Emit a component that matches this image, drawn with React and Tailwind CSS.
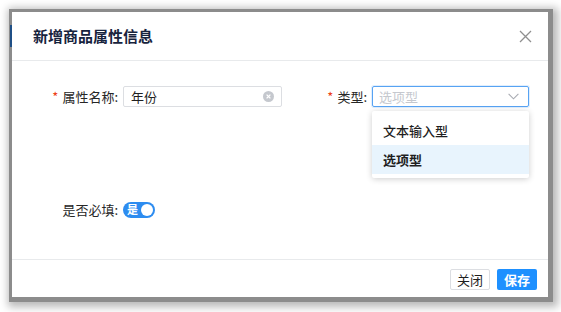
import React from 'react';

const font = { fontFamily: '"Noto Sans CJK SC", "Noto Sans", sans-serif' };

const FieldLabel = ({ required, children }) => (
  <div className="flex w-[90px] shrink-0 items-center justify-end pr-[5px] text-[13px] text-[#262626]">
    {required && <span className="mr-[4px] text-[#ed4014]">*</span>}
    {children}
  </div>
);

export default function App() {
  return (
    <div className="h-[312px] w-[561px] overflow-hidden bg-white" style={font}>
      <div className="relative ml-[12px] mt-[12px] flex h-[285px] w-[536px] flex-col bg-white shadow-[1px_1px_0_4px_#8c8c8c,3px_3px_8px_7px_rgba(0,0,0,0.28)]">
        <div className="absolute left-[-2px] top-[13px] h-[22px] w-[2px] bg-[#1f4f86]" />

        {/* header */}
        <div className="flex h-[49px] shrink-0 items-center justify-between border-b border-[#e8eaec] pl-[21px] pr-[16px]">
          <span className="text-[15px] font-semibold text-[#17233d]">新增商品属性信息</span>
          <svg width="13" height="13" viewBox="0 0 13 13" className="mt-[1px]">
            <path d="M1 1L12 12M12 1L1 12" stroke="#8f8f8f" strokeWidth="1.3" fill="none" />
          </svg>
        </div>

        {/* body */}
        <div className="relative flex-1 px-[21px] pt-[25px]">
          <div className="flex">
            <div className="flex w-[249px] items-center">
              <FieldLabel required>属性名称:</FieldLabel>
              <div className="flex h-[21px] w-[159px] items-center justify-between rounded-[2px] border border-[#dcdee2] pl-[7px] pr-[7px] text-[13px] text-[#1f1f1f]">
                <span>年份</span>
                <svg width="11" height="11" viewBox="0 0 11 11">
                  <circle cx="5.5" cy="5.5" r="5.5" fill="#c5c8ce" />
                  <path d="M3.6 3.6L7.4 7.4M7.4 3.6L3.6 7.4" stroke="#fff" strokeWidth="1.3" />
                </svg>
              </div>
            </div>
            <div className="flex items-center">
              <FieldLabel required>类型:</FieldLabel>
              <div className="flex h-[21px] w-[157px] items-center justify-between rounded-[2px] border border-[#57a3f3] pl-[6px] pr-[9px] text-[13px] text-[#c5c8ce] shadow-[0_0_0_1px_rgba(45,140,240,0.15)]">
                <span>选项型</span>
                <svg width="11" height="7" viewBox="0 0 11 7">
                  <path d="M0.6 0.8L5.5 5.8L10.4 0.8" stroke="#a8abb2" strokeWidth="1.1" fill="none" />
                </svg>
              </div>
            </div>
          </div>

          <div className="mt-[93px] flex items-center">
            <FieldLabel>是否必填:</FieldLabel>
            <div className="flex h-[16px] w-[32px] items-center justify-between rounded-full bg-[#2d8cf0] pl-[4px] pr-[2px]">
              <span className="text-[11px] font-semibold leading-none text-white">是</span>
              <span className="h-[12px] w-[12px] rounded-full bg-white" />
            </div>
          </div>

          {/* dropdown */}
          <div className="absolute left-[360px] top-[50px] w-[157px] rounded-[2px] bg-white pb-[4px] pt-[6px] text-[13px] text-[#1f1f1f] shadow-[0_1px_6px_rgba(0,0,0,0.2)]">
            <div className="flex h-[28px] items-center pl-[11px] font-medium">文本输入型</div>
            <div className="flex h-[29px] items-center bg-[#e8f4fd] pl-[11px] font-semibold">选项型</div>
          </div>
        </div>

        {/* footer */}
        <div className="flex h-[38px] shrink-0 items-start justify-end gap-[7px] border-t border-[#e8eaec] pr-[11px] pt-[9px]">
          <button className="flex h-[21px] w-[40px] items-center justify-center rounded-[2px] border border-[#dcdee2] bg-white text-[13px] text-[#1f1f1f]">
            关闭
          </button>
          <button className="flex h-[21px] w-[40px] items-center justify-center rounded-[2px] bg-[#1e90ff] text-[13px] font-semibold text-white">
            保存
          </button>
        </div>
      </div>
    </div>
  );
}
